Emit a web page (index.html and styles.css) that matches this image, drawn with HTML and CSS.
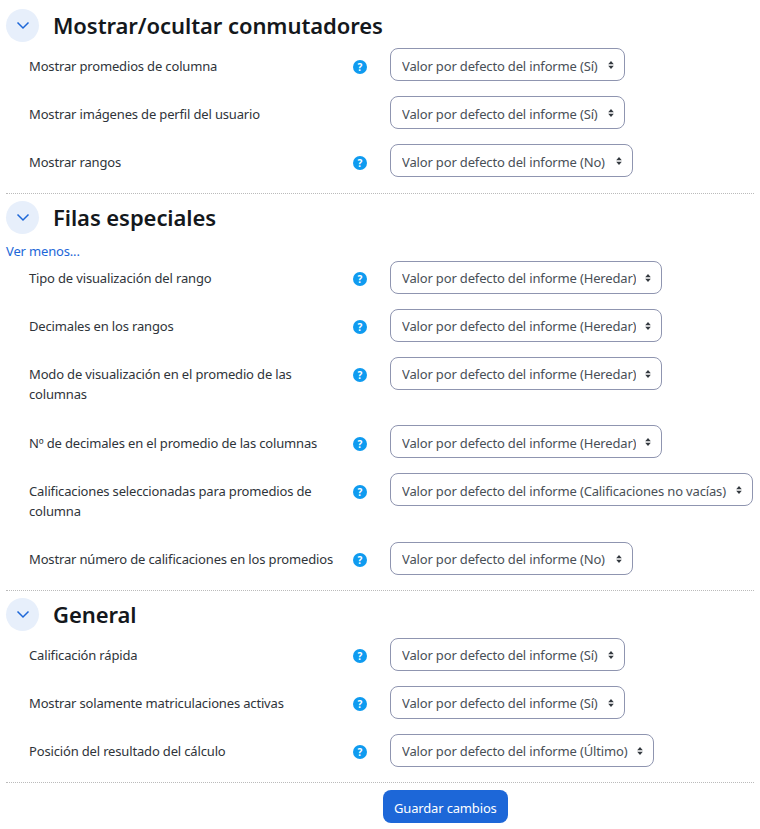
FILE: index.html
```html
<!DOCTYPE html>
<html lang="es">
<head>
  <meta charset="UTF-8">
  <meta name="viewport" content="width=device-width, initial-scale=1.0">
  <title>Preferencias del calificador</title>
  <link rel="stylesheet" href="styles.css">
</head>
<body>
  <form class="prefs">
    <section class="group">
      <div class="group-header">
        <span class="toggle"><svg viewBox="0 0 16 16" width="16" height="16"><path d="M2.5 5.5 8 11l5.5-5.5" fill="none" stroke="currentColor" stroke-width="1.5"/></svg></span>
        <h3>Mostrar/ocultar conmutadores</h3>
      </div>
      <div class="row row-low">
        <label>Mostrar promedios de columna</label>
        <span class="help">?</span>
        <select class="sel-si"><option>Valor por defecto del informe (Sí)</option></select>
      </div>
      <div class="row row-low">
        <label>Mostrar imágenes de perfil del usuario</label>
        <span class="help-empty"></span>
        <select class="sel-si"><option>Valor por defecto del informe (Sí)</option></select>
      </div>
      <div class="row row-low">
        <label>Mostrar rangos</label>
        <span class="help">?</span>
        <select class="sel-no"><option>Valor por defecto del informe (No)</option></select>
      </div>
    </section>

    <section class="group">
      <div class="group-header">
        <span class="toggle"><svg viewBox="0 0 16 16" width="16" height="16"><path d="M2.5 5.5 8 11l5.5-5.5" fill="none" stroke="currentColor" stroke-width="1.5"/></svg></span>
        <h3>Filas especiales</h3>
      </div>
      <a class="more" href="#">Ver menos...</a>
      <div class="row">
        <label>Tipo de visualización del rango</label>
        <span class="help">?</span>
        <select class="sel-heredar"><option>Valor por defecto del informe (Heredar)</option></select>
      </div>
      <div class="row">
        <label>Decimales en los rangos</label>
        <span class="help">?</span>
        <select class="sel-heredar"><option>Valor por defecto del informe (Heredar)</option></select>
      </div>
      <div class="row">
        <label>Modo de visualización en el promedio de las columnas</label>
        <span class="help">?</span>
        <select class="sel-heredar"><option>Valor por defecto del informe (Heredar)</option></select>
      </div>
      <div class="row row-low">
        <label>Nº de decimales en el promedio de las columnas</label>
        <span class="help">?</span>
        <select class="sel-heredar"><option>Valor por defecto del informe (Heredar)</option></select>
      </div>
      <div class="row row-low row-extra">
        <label>Calificaciones seleccionadas para promedios de columna</label>
        <span class="help">?</span>
        <select class="sel-vacias"><option>Valor por defecto del informe (Calificaciones no vacías)</option></select>
      </div>
      <div class="row">
        <label>Mostrar número de calificaciones en los promedios</label>
        <span class="help">?</span>
        <select class="sel-no"><option>Valor por defecto del informe (No)</option></select>
      </div>
    </section>

    <section class="group">
      <div class="group-header">
        <span class="toggle"><svg viewBox="0 0 16 16" width="16" height="16"><path d="M2.5 5.5 8 11l5.5-5.5" fill="none" stroke="currentColor" stroke-width="1.5"/></svg></span>
        <h3>General</h3>
      </div>
      <div class="row">
        <label>Calificación rápida</label>
        <span class="help">?</span>
        <select class="sel-si"><option>Valor por defecto del informe (Sí)</option></select>
      </div>
      <div class="row">
        <label>Mostrar solamente matriculaciones activas</label>
        <span class="help">?</span>
        <select class="sel-si"><option>Valor por defecto del informe (Sí)</option></select>
      </div>
      <div class="row">
        <label>Posición del resultado del cálculo</label>
        <span class="help">?</span>
        <select class="sel-ultimo"><option>Valor por defecto del informe (Último)</option></select>
      </div>
    </section>

    <div class="actions">
      <button type="button">Guardar cambios</button>
    </div>
  </form>
</body>
</html>
```

FILE: styles.css
```css
body {
  font-family: "Noto Sans", "Open Sans", Arial, sans-serif;
  font-size: 13px;
  line-height: 20px;
  letter-spacing: -0.16px;
  margin: 0;
  color: #2f343a;
  background-color: #fff;
}

.prefs {
  padding: 0 6px;
}

.group {
  border-bottom: 1px dotted #bbb;
  margin-bottom: 7px;
}

.group:first-child {
  padding-bottom: 1px;
}

.group-header {
  display: flex;
  align-items: center;
  height: 32px;
  margin-bottom: 8px;
}

.group:first-child .group-header {
  padding-top: 9px;
  margin-bottom: 7px;
}

.toggle {
  display: flex;
  align-items: center;
  justify-content: center;
  width: 33px;
  height: 33px;
  border-radius: 50%;
  background-color: #e7effb;
  color: #1d67d8;
  flex: none;
}

.group-header h3 {
  font-size: 22px;
  font-weight: 600;
  line-height: 32px;
  letter-spacing: -0.07px;
  margin: 0 0 0 14px;
  color: #14181c;
}

.more {
  display: block;
  color: #1d67d8;
  text-decoration: none;
}

.row {
  display: flex;
  align-items: flex-start;
  padding-left: 23px;
}

.row label {
  width: 318px;
  padding-top: 7px;
  padding-bottom: 21px;
  flex: none;
}

.help,
.help-empty {
  width: 14px;
  height: 14px;
  margin: 11px 23px 0 6px;
  flex: none;
}

.help {
  border-radius: 50%;
  background-color: #0f9bf0;
  color: #fff;
  font-size: 10px;
  font-weight: 700;
  line-height: 14px;
  letter-spacing: 0;
  text-align: center;
}

select {
  appearance: none;
  font-family: inherit;
  font-size: 13px;
  line-height: 20px;
  letter-spacing: inherit;
  height: 33px;
  padding: 5px 25px 5px 11px;
  margin-bottom: 15px;
  border: 1px solid #8f95b0;
  border-radius: 8px;
  color: #495057;
  background: #fff url("data:image/svg+xml,%3Csvg xmlns='http://www.w3.org/2000/svg' viewBox='0 0 10 12'%3E%3Cpath d='M5 1 8.5 5h-7zM5 11 1.5 7h7z' fill='%23343a40'/%3E%3C/svg%3E") no-repeat right 9px center / 8px 10px;
}

/* these rows sit a pixel lower in their box */
.row-low label {
  padding-top: 8px;
  padding-bottom: 20px;
}

.row-low .help,
.row-low .help-empty {
  margin-top: 12px;
}

.row-low select {
  padding-top: 6px;
  padding-bottom: 4px;
}

.row-extra {
  padding-bottom: 1px;
}

.sel-si {
  width: 235px;
}

.sel-no {
  width: 243px;
}

.sel-heredar {
  width: 272px;
}

.sel-vacias {
  width: 363px;
}

.sel-ultimo {
  width: 264px;
}

.actions {
  display: flex;
  margin-left: 377px;
}

button {
  font-family: inherit;
  font-size: 13px;
  line-height: 20px;
  letter-spacing: inherit;
  height: 33px;
  padding: 2px 11px 0;
  border: 0;
  border-radius: 8px;
  color: #fff;
  background-color: #1d67d8;
}
```
